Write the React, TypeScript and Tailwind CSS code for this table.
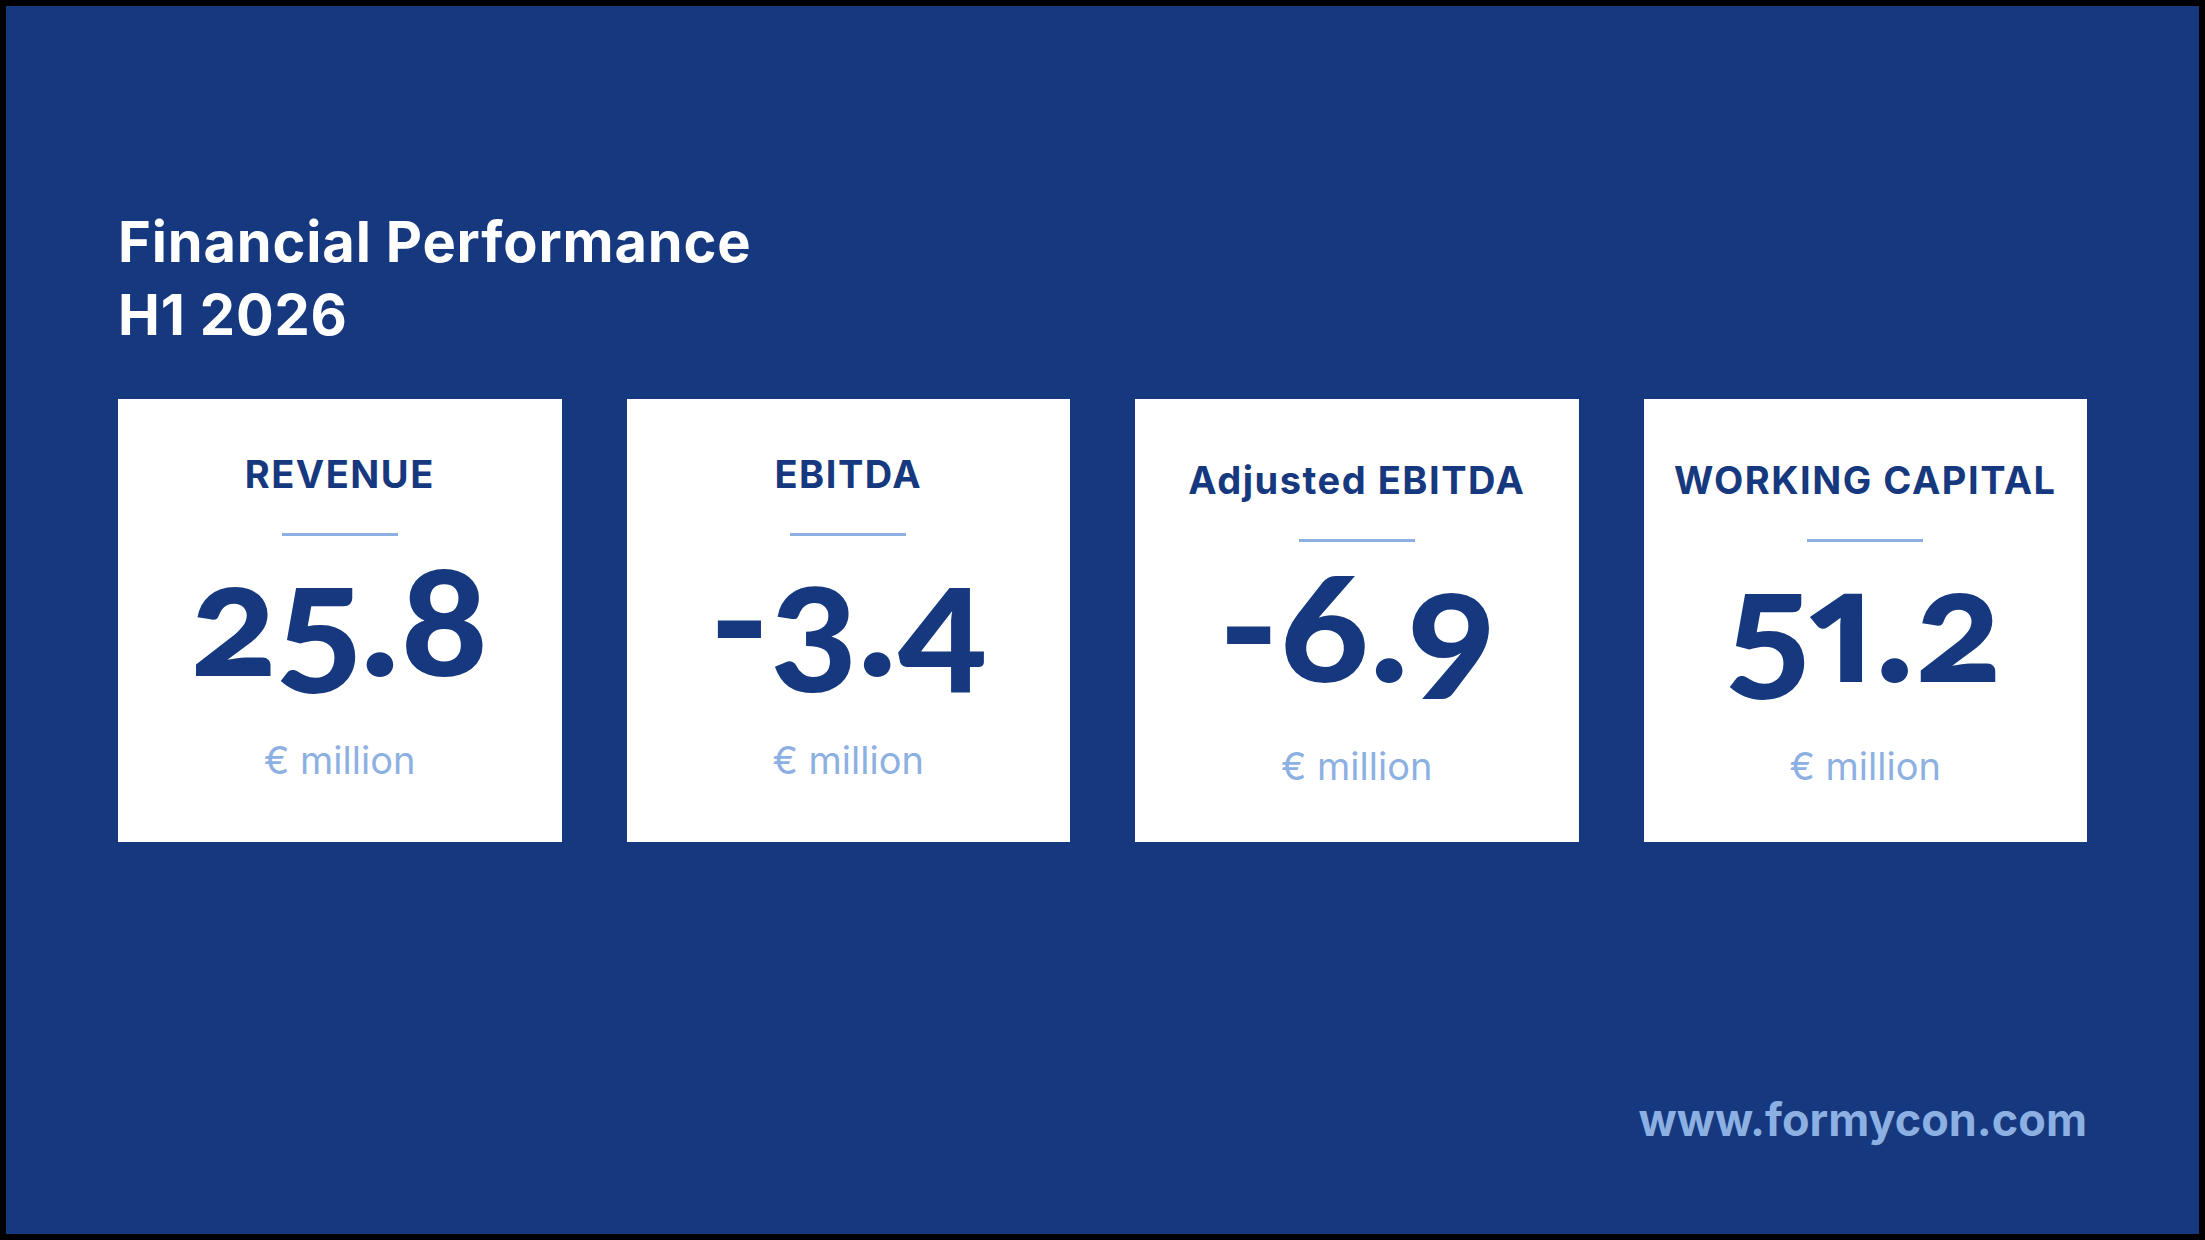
import React from "react";

type Kpi = {
  label: string;
  value: string;
  // cards 3 and 4 sit a little lower in the slide
  low?: boolean;
};

const kpis: Kpi[] = [
  { label: "REVENUE", value: "25.8" },
  { label: "EBITDA", value: "-3.4" },
  { label: "Adjusted EBITDA", value: "-6.9", low: true },
  { label: "WORKING CAPITAL", value: "51.2", low: true },
];

const KpiCard = ({ kpi }: { kpi: Kpi }) => (
  <div
    className={`flex h-[443px] flex-col items-center bg-white ${
      kpi.low ? "pt-[59px]" : "pt-[53px]"
    }`}
  >
    <h2 className="text-[38px] leading-[44px] font-bold tracking-[0.04em] whitespace-nowrap text-[#15387e]">
      {kpi.label}
    </h2>
    <div className="mt-[37px] h-[3px] w-[116px] bg-[#8db0e3]" />
    <div
      className="mt-[4px] scale-x-[1.06] text-[154px] leading-[154px] font-black text-[#15387e] oldstyle-nums proportional-nums"
      style={{ fontFamily: "Lato, sans-serif" }}
    >
      {kpi.value}
    </div>
    <div className="mt-[42px] text-[38px] leading-[48px] text-[#8db0e3]">
      € million
    </div>
  </div>
);

export default function App() {
  return (
    <div
      className="h-[1240px] w-full bg-black p-[6px]"
      style={{ fontFamily: "Inter, 'Open Sans', sans-serif" }}
    >
      <div className="flex h-full flex-col bg-[#15387e] px-[112px] pt-[200px] pb-[86px]">
        <h1 className="text-[56px] leading-[73px] font-bold tracking-[0.015em] text-white">
          Financial Performance
          <br />
          H1 2026
        </h1>

        <div className="mt-[47px] grid grid-cols-4 gap-[65px]">
          {kpis.map((kpi) => (
            <KpiCard key={kpi.label} kpi={kpi} />
          ))}
        </div>

        <div className="mt-auto text-right text-[45px] leading-[56px] font-bold text-[#8db0e3]">
          www.formycon.com
        </div>
      </div>
    </div>
  );
}
